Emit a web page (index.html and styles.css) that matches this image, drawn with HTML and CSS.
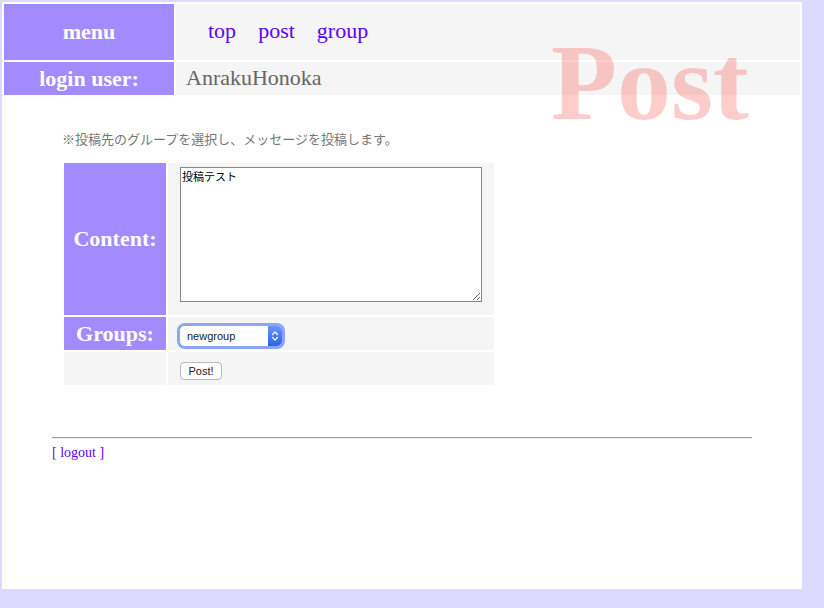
FILE: index.html
```html
<!DOCTYPE html>
<html lang="ja">
<head>
<meta charset="utf-8">
<title>Post</title>
<link rel="stylesheet" href="styles.css">
</head>
<body>
<div class="page">
  <div class="header">
    <div class="label">menu</div>
    <nav class="nav"><a href="#">top</a><a href="#">post</a><a href="#">group</a></nav>
    <div class="label">login user:</div>
    <div class="user">AnrakuHonoka</div>
  </div>
  <div class="watermark">Post</div>
  <div class="main">
    <p class="note">※投稿先のグループを選択し、メッセージを投稿します。</p>
    <form class="form">
      <div class="flabel">Content:</div>
      <div class="fcell fcell-top"><textarea class="content">投稿テスト</textarea></div>
      <div class="flabel">Groups:</div>
      <div class="fcell fcell-low">
        <div class="select">
          <select class="select-input"><option>newgroup</option></select>
          <span class="select-arrow"><svg width="8" height="12" viewBox="0 0 8 12"><path d="M1.5 4.5 L4 2 L6.5 4.5 M1.5 7.5 L4 10 L6.5 7.5" fill="none" stroke="#fff" stroke-width="1.2" stroke-linecap="round" stroke-linejoin="round"/></svg></span>
        </div>
      </div>
      <div class="fcell-empty"></div>
      <div class="fcell fcell-low"><button type="button" class="btn">Post!</button></div>
    </form>
  </div>
  <hr class="rule">
  <a class="logout" href="#">[ logout ]</a>
</div>
</body>
</html>
```
FILE: styles.css
```css
body {
  margin: 2px;
  background: #dedaff;
  font-family: "Liberation Serif", "Noto Sans CJK JP", serif;
}
.page {
  position: relative;
  width: 800px;
  min-height: 587px;
  background: #fff;
  overflow: hidden;
}
.header {
  display: grid;
  grid-template-columns: 170px 1fr;
  grid-template-rows: 56px 33px;
  gap: 2px;
  padding: 2px;
}
.label, .flabel {
  background: #a38bff;
  color: #fff;
  font-weight: bold;
  font-size: 22px;
  display: flex;
  align-items: center;
  justify-content: center;
}
.nav {
  background: #f5f5f5;
  display: flex;
  align-items: center;
  gap: 22px;
  padding-left: 32px;
  padding-bottom: 2px;
  font-size: 22px;
}
.nav a, .logout {
  color: #5c00ff;
  text-decoration: none;
}
.user {
  background: #f5f5f5;
  color: #666;
  font-size: 22px;
  display: flex;
  align-items: center;
  padding-left: 10px;
  padding-bottom: 1px;
}
.watermark {
  position: absolute;
  left: 549px;
  top: 27px;
  font-weight: bold;
  font-size: 108px;
  line-height: 108px;
  color: rgba(255, 0, 0, 0.2);
  pointer-events: none;
}
.main {
  padding: 33px 0 0 60px;
}
.note {
  margin: 0 0 11px;
  font-size: 13px;
  line-height: 20px;
  color: #777;
}
.form {
  display: grid;
  width: max-content;
  grid-template-columns: 102px 326px;
  grid-template-rows: 152px 33px 33px;
  gap: 2px;
  padding: 2px;
}
.fcell {
  background: #f5f5f5;
  display: flex;
  align-items: center;
  padding-left: 12px;
}
.fcell-top {
  align-items: flex-start;
  padding-top: 4px;
}
.fcell-low {
  padding-top: 5px;
}
.fcell-empty {
  background: #f5f5f5;
}
.content {
  box-sizing: border-box;
  width: 302px;
  height: 135px;
  margin: 0;
  border: 1px solid #888;
  padding: 2px 1px;
  font-family: "Noto Sans CJK JP", "Liberation Sans", sans-serif;
  font-size: 11px;
  line-height: 13px;
  color: #000;
  background: #fff;
}
.select {
  display: inline-flex;
  width: 102px;
  height: 20px;
  border-radius: 5px;
  box-shadow: 0 0 0 3px #8ea5f7;
  background: #fff;
  overflow: hidden;
}
.select-input {
  appearance: none;
  -webkit-appearance: none;
  flex: 1;
  min-width: 0;
  border: 0;
  margin: 0;
  padding: 0 0 0 7px;
  background: #fff;
  font-family: "Liberation Sans", sans-serif;
  font-size: 11px;
  color: #222;
  outline: none;
}
.select-arrow {
  width: 14px;
  display: flex;
  align-items: center;
  justify-content: center;
  background: linear-gradient(#6a95fa, #2b62f4);
}
.btn {
  box-sizing: border-box;
  width: 42px;
  height: 18px;
  margin: 0;
  padding: 0;
  border: 1px solid #b8b8b8;
  border-radius: 4px;
  background: #fff;
  font-family: "Liberation Sans", sans-serif;
  font-size: 11px;
  color: #222;
}
.rule {
  width: 700px;
  height: 0;
  margin: 50px 0 0 50px;
  border: 0;
  border-top: 1px solid #9a9a9a;
  border-bottom: 1px solid #eee;
}
.logout {
  display: block;
  width: max-content;
  margin: 6px 0 0 50px;
  font-size: 14px;
}
```
